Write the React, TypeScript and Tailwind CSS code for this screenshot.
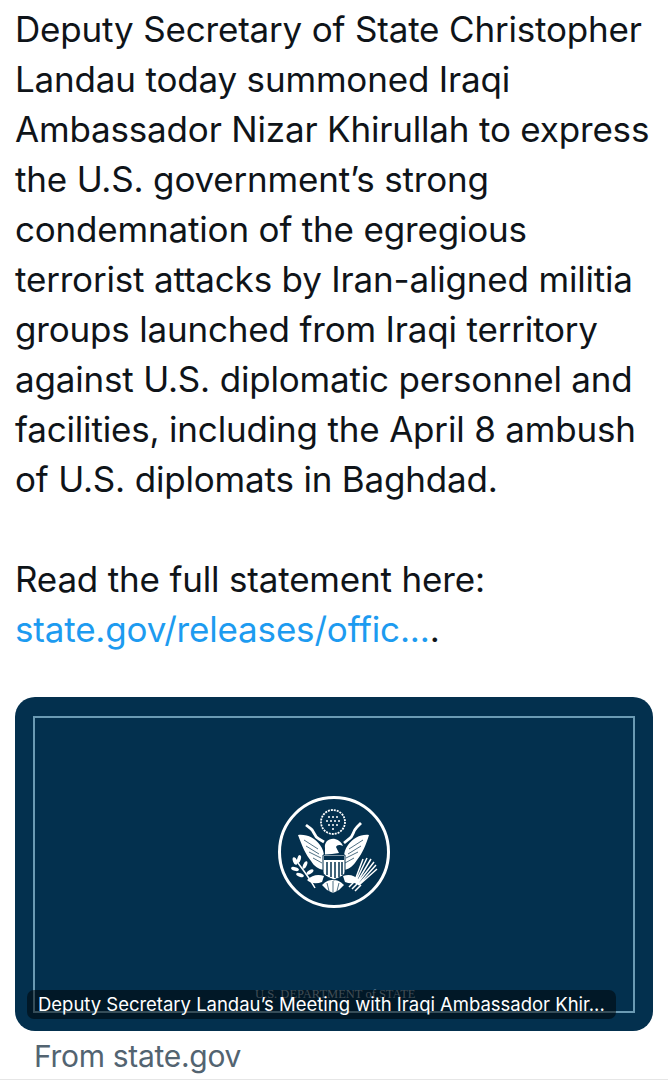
import React from "react";

function Seal() {
  return (
    <svg viewBox="0 0 114 114" className="w-[114px] h-[114px]" fill="none">
      <circle cx="57" cy="57" r="54.5" stroke="#fff" strokeWidth="3" />
      {/* crest */}
      <circle cx="56" cy="27" r="12" stroke="#fff" strokeWidth="1.8" strokeDasharray="2 1" />
      <g fill="#fff">
        <circle cx="52" cy="22" r="1" /><circle cx="56" cy="22" r="1" /><circle cx="60" cy="22" r="1" />
        <circle cx="50" cy="26" r="1" /><circle cx="54" cy="26" r="1" /><circle cx="58" cy="26" r="1" /><circle cx="62" cy="26" r="1" />
        <circle cx="52" cy="30" r="1" /><circle cx="56" cy="30" r="1" /><circle cx="60" cy="30" r="1" />
        <circle cx="56" cy="34" r="1" />
        {/* left wing */}
        <path d="M21 40 C30 39 38 43 43 50 C46 54 47 58 47 62 L47 75 C41 74 37 71 34 66 C29 60 25 51 21 40Z" />
        {/* right wing */}
        <path d="M92 40 C84 39 76 43 71 50 C68 54 67 58 67 62 L67 75 C73 74 77 70 80 65 C85 59 89 50 92 40Z" />
        {/* head */}
        <path d="M48 53 C47 47 52 43 58 44 C62 45 65 48 66 51 C62 49 60 50 59 52 L62 58 L48 60Z" />
        {/* tail */}
        <path d="M45 90 L50 95 L56 98 L62 95 L67 90 C63 86 60 85 56 85 C52 85 49 86 45 90Z" />
        {/* talons */}
        <path d="M30 85 C35 80 41 79 47 81 L45 87 C40 89 34 89 30 85Z" />
        <path d="M82 85 C77 80 72 79 66 81 L68 87 C73 89 78 89 82 85Z" />
      </g>
      {/* wing feather lines */}
      <g stroke="#03304e" strokeWidth="0.7">
        <path d="M27 45 L41 54M29 51 L42 59M32 57 L44 63M36 63 L45 68" />
        <path d="M86 45 L72 54M84 51 L71 59M81 57 L69 63M77 63 L68 68" />
        <path d="M50 88 L52 96M56 86 L56 98M62 88 L60 96" />
      </g>
      {/* shield */}
      <path d="M46 60 L68 60 L68 77 C68 81 61 83 57 85 C53 83 46 81 46 77Z" fill="#fff" stroke="#03304e" strokeWidth="1" />
      <rect x="47" y="61" width="20" height="4" fill="#03304e" />
      <g stroke="#03304e" strokeWidth="1.5">
        <path d="M50 67 V80M54 67 V82M58 67 V83M62 67 V82M65 67 V80" />
      </g>
      {/* scrolls */}
      <path d="M29 30 L33 33 C38 36 36 41 42 44 L47 47" stroke="#fff" strokeWidth="2.8" />
      <path d="M84 28 L80 32 C75 37 77 41 72 44 L67 48" stroke="#fff" strokeWidth="2.8" />
      {/* olive branch */}
      <g stroke="#fff" strokeWidth="1.5">
        <path d="M18 64 C24 72 32 82 38 93" />
      </g>
      <g fill="#fff">
        <ellipse cx="18" cy="66" rx="2" ry="4" transform="rotate(-20 18 66)" />
        <ellipse cx="22" cy="64" rx="1.8" ry="4" transform="rotate(15 22 64)" />
        <ellipse cx="18" cy="74" rx="4" ry="1.8" transform="rotate(15 18 74)" />
        <ellipse cx="28" cy="70" rx="1.8" ry="4" transform="rotate(25 28 70)" />
        <ellipse cx="23" cy="80" rx="4" ry="1.8" transform="rotate(20 23 80)" />
        <ellipse cx="33" cy="77" rx="4" ry="1.8" transform="rotate(-35 33 77)" />
      </g>
      {/* arrows */}
      <g stroke="#fff" strokeWidth="1.5">
        <path d="M77 88 L86 64M78 88 L90 63M79 89 L94 64M80 89 L97 67M81 90 L99 70M82 90 L100 74" />
        <path d="M72 92 L80 84M75 94 L82 87M78 96 L84 90" />
      </g>
    </svg>
  );
}

export default function App() {
  return (
    <div className="w-[668px] h-[1080px] bg-white overflow-hidden border-b border-[#e6e6e6] font-['Inter','Liberation_Sans',sans-serif]">
      <div className="pt-[4px] pl-[15px] text-[35px] leading-[50px] tracking-[-0.18px] text-[#0f1419] whitespace-nowrap">
        <p>Deputy Secretary of State Christopher</p>
        <p>Landau today summoned Iraqi</p>
        <p>Ambassador Nizar Khirullah to express</p>
        <p>the U.S. government’s strong</p>
        <p>condemnation of the egregious</p>
        <p>terrorist attacks by Iran-aligned militia</p>
        <p>groups launched from Iraqi territory</p>
        <p>against U.S. diplomatic personnel and</p>
        <p>facilities, including the April 8 ambush</p>
        <p>of U.S. diplomats in Baghdad.</p>
        <p className="mt-[50px]">Read the full statement here:</p>
        <p>
          <span className="text-[#1d9bf0]">state.gov/releases/offic...</span>.
        </p>
      </div>

      <div className="relative mt-[43px] ml-[15px] w-[638px] h-[334px] rounded-[20px] bg-[#03304e] flex items-center justify-center pb-[24px]">
        <div className="absolute left-[18px] top-[19px] w-[602px] h-[297px] border-2 border-[#6b9ab3]" />
        <Seal />
        <div className="absolute left-[240px] top-[290px] font-['Liberation_Serif',serif] text-[12.5px] leading-[15px] text-[#7f99aa] whitespace-nowrap">
          U.S. DEPARTMENT of STATE
        </div>
        <div className="absolute left-[12px] top-[293px] w-[589px] h-[29px] rounded-[7px] bg-[#000000]/50 pl-[11px] text-[18.5px] leading-[29px] tracking-[-0.02px] text-white whitespace-nowrap">
          Deputy Secretary Landau’s Meeting with Iraqi Ambassador Khir...
        </div>
      </div>

      <p className="mt-[7px] pl-[34px] text-[30px] leading-[36px] tracking-[-0.3px] text-[#536471]">From state.gov</p>
    </div>
  );
}
